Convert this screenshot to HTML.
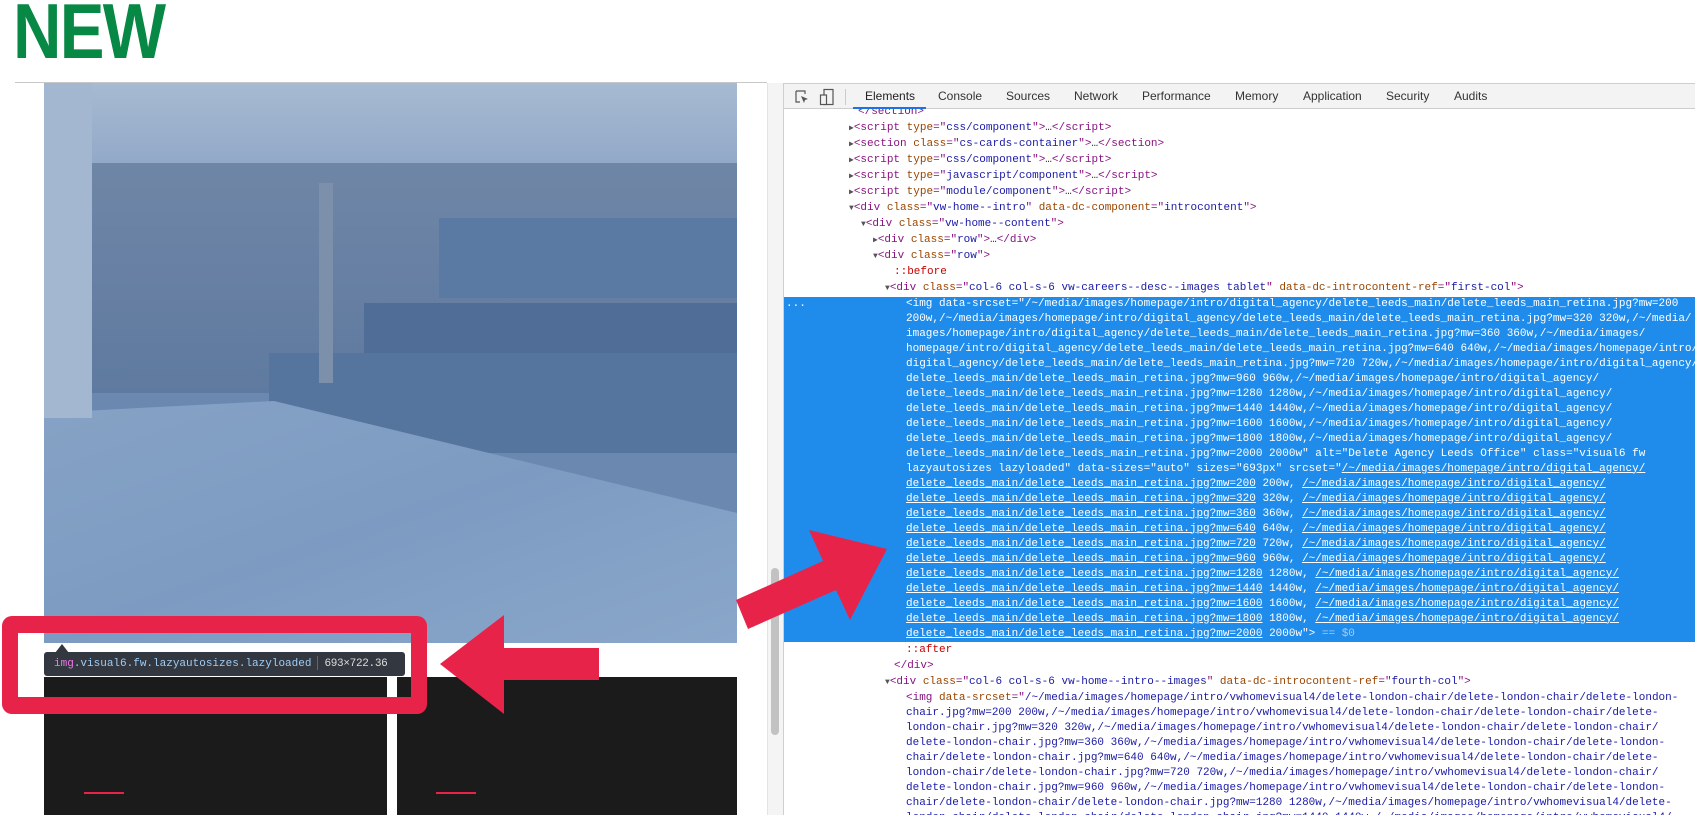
<!DOCTYPE html>
<html><head><meta charset="utf-8">
<style>
*{margin:0;padding:0;box-sizing:border-box}
html,body{width:1695px;height:815px;overflow:hidden;background:#fff;position:relative;font-family:"Liberation Sans",sans-serif}
.abs{position:absolute}
#new{left:13px;top:-8px;font-weight:bold;font-size:78px;color:#078845;transform:scaleX(0.86);transform-origin:left top;letter-spacing:-2px;line-height:1;font-family:"Liberation Sans",sans-serif}
#hr{left:15px;top:82px;width:752px;height:1px;background:#c8c8c8}
#dev{left:783px;top:83px;width:912px;height:732px;border-left:1px solid #cfcfcf;background:#fff;overflow:hidden}
#tb{position:absolute;left:0;top:0;width:912px;height:26px;background:#f3f3f3;border-top:1px solid #cfcfcf;border-bottom:1px solid #cdcdcd;z-index:3}
#tb span{position:absolute;top:5px;font-size:12px;color:#333}
#code{position:absolute;left:0;top:21px;width:912px;font-family:"Liberation Mono",monospace;font-size:11px;color:#222}
.l,.w{white-space:pre;position:relative;overflow:hidden}
.l{height:16px;line-height:16px}
.w{height:15px;line-height:15px}
.t{color:#881280}.a{color:#994500}.v{color:#1a1aa6}.p{color:#c80000}
.tri{font-size:8px;color:#555}
#sel{background:#1f8ceb;color:#fff}
#sel .u{text-decoration:underline}
#sel .f{color:#a8c9f0}
.card{top:677px;height:138px;background:#1b1b1b}
.dash{top:792px;height:2px;width:40px;background:#e8234a}
</style></head><body>
<div id="new" class="abs">NEW</div>
<div id="hr" class="abs"></div>

<svg class="abs" style="left:44px;top:83px" width="693" height="560" viewBox="0 0 693 560">
<defs>
<linearGradient id="g1" x1="0" y1="0" x2="0" y2="1"><stop offset="0" stop-color="#a7bad2"/><stop offset="1" stop-color="#8ea6c6"/></linearGradient>
<linearGradient id="g2" x1="0" y1="0" x2="0" y2="1"><stop offset="0" stop-color="#6f86a6"/><stop offset="1" stop-color="#5f7aa0"/></linearGradient>
<linearGradient id="g3" x1="0" y1="0" x2="1" y2="1"><stop offset="0" stop-color="#86a2c5"/><stop offset="0.5" stop-color="#7d9bc2"/><stop offset="1" stop-color="#8aa7ca"/></linearGradient>
</defs>
<rect width="693" height="560" fill="#6b88b0"/>
<rect width="693" height="95" fill="url(#g1)"/>
<rect y="80" width="693" height="230" fill="url(#g2)"/>
<rect x="395" y="135" width="300" height="80" fill="#5a7aa3"/>
<rect x="320" y="220" width="373" height="70" fill="#4f6d97"/>
<rect x="225" y="270" width="468" height="100" fill="#56759e"/>
<polygon points="0,330 230,318 693,430 693,560 0,560" fill="url(#g3)"/>
<rect x="0" y="0" width="48" height="335" fill="#a3b7d1"/>
<rect x="275" y="100" width="14" height="200" fill="#7c8fab"/>
</svg>

<div class="abs card" style="left:44px;width:343px"></div>
<div class="abs card" style="left:397px;width:340px"></div>
<div class="abs dash" style="left:84px"></div>
<div class="abs dash" style="left:436px"></div>

<div class="abs" style="left:767px;top:83px;width:16px;height:732px;background:#f4f4f4;border-left:1px solid #e3e3e3"></div>
<div class="abs" style="left:771px;top:568px;width:8px;height:167px;background:#c2c2c2;border-radius:4px"></div>

<div id="dev" class="abs">
<div id="tb">
<svg style="position:absolute;left:10px;top:5px" width="16" height="16" viewBox="0 0 16 16"><path d="M2 2h9v3M2 2v11h4" fill="none" stroke="#555" stroke-width="1.2"/><path d="M7 7l7 3-3 1-1 3z" fill="#555"/></svg>
<svg style="position:absolute;left:35px;top:4px" width="16" height="18" viewBox="0 0 16 18"><rect x="5" y="1.5" width="9" height="15" fill="none" stroke="#555" stroke-width="1.2"/><rect x="1.5" y="7" width="6" height="9.5" fill="#f3f3f3" stroke="#555" stroke-width="1.2"/></svg>
<div style="position:absolute;left:61px;top:5px;width:1px;height:16px;background:#ccc"></div>
<span style="left:81px;color:#222">Elements</span>
<div style="position:absolute;left:69px;top:23px;width:73px;height:2px;background:#1a73e8"></div>
<span style="left:154px">Console</span>
<span style="left:222px">Sources</span>
<span style="left:290px">Network</span>
<span style="left:358px">Performance</span>
<span style="left:451px">Memory</span>
<span style="left:519px">Application</span>
<span style="left:602px">Security</span>
<span style="left:670px">Audits</span>
</div>
<div id="code">
<div class="l" style="padding-left:74px"><span class="t">&lt;/section&gt;</span></div>
<div class="l" style="padding-left:65px"><span class="tri">▶</span><span class="t">&lt;script</span> <span class="a">type</span><span class="t">="</span><span class="v">css/component</span><span class="t">"&gt;</span>…<span class="t">&lt;/script&gt;</span></div>
<div class="l" style="padding-left:65px"><span class="tri">▶</span><span class="t">&lt;section</span> <span class="a">class</span><span class="t">="</span><span class="v">cs-cards-container</span><span class="t">"&gt;</span>…<span class="t">&lt;/section&gt;</span></div>
<div class="l" style="padding-left:65px"><span class="tri">▶</span><span class="t">&lt;script</span> <span class="a">type</span><span class="t">="</span><span class="v">css/component</span><span class="t">"&gt;</span>…<span class="t">&lt;/script&gt;</span></div>
<div class="l" style="padding-left:65px"><span class="tri">▶</span><span class="t">&lt;script</span> <span class="a">type</span><span class="t">="</span><span class="v">javascript/component</span><span class="t">"&gt;</span>…<span class="t">&lt;/script&gt;</span></div>
<div class="l" style="padding-left:65px"><span class="tri">▶</span><span class="t">&lt;script</span> <span class="a">type</span><span class="t">="</span><span class="v">module/component</span><span class="t">"&gt;</span>…<span class="t">&lt;/script&gt;</span></div>
<div class="l" style="padding-left:65px"><span class="tri">▼</span><span class="t">&lt;div</span> <span class="a">class</span><span class="t">="</span><span class="v">vw-home--intro</span><span class="t">"</span> <span class="a">data-dc-component</span><span class="t">="</span><span class="v">introcontent</span><span class="t">"&gt;</span></div>
<div class="l" style="padding-left:77px"><span class="tri">▼</span><span class="t">&lt;div</span> <span class="a">class</span><span class="t">="</span><span class="v">vw-home--content</span><span class="t">"&gt;</span></div>
<div class="l" style="padding-left:89px"><span class="tri">▶</span><span class="t">&lt;div</span> <span class="a">class</span><span class="t">="</span><span class="v">row</span><span class="t">"&gt;</span>…<span class="t">&lt;/div&gt;</span></div>
<div class="l" style="padding-left:89px"><span class="tri">▼</span><span class="t">&lt;div</span> <span class="a">class</span><span class="t">="</span><span class="v">row</span><span class="t">"&gt;</span></div>
<div class="l" style="padding-left:110px"><span class="p">::before</span></div>
<div class="l" style="padding-left:101px"><span class="tri">▼</span><span class="t">&lt;div</span> <span class="a">class</span><span class="t">="</span><span class="v">col-6 col-s-6 vw-careers--desc--images tablet</span><span class="t">"</span> <span class="a">data-dc-introcontent-ref</span><span class="t">="</span><span class="v">first-col</span><span class="t">"&gt;</span></div>
<div id="sel" style="margin-top:0.5px">
<div class="w"><span style="position:absolute;left:2px">...</span><span style="position:absolute;left:122px">&lt;img data-srcset="/~/media/images/homepage/intro/digital_agency/delete_leeds_main/delete_leeds_main_retina.jpg?mw=200</span></div>
<div class="w" style="padding-left:122px">200w,/~/media/images/homepage/intro/digital_agency/delete_leeds_main/delete_leeds_main_retina.jpg?mw=320 320w,/~/media/</div>
<div class="w" style="padding-left:122px">images/homepage/intro/digital_agency/delete_leeds_main/delete_leeds_main_retina.jpg?mw=360 360w,/~/media/images/</div>
<div class="w" style="padding-left:122px">homepage/intro/digital_agency/delete_leeds_main/delete_leeds_main_retina.jpg?mw=640 640w,/~/media/images/homepage/intro/</div>
<div class="w" style="padding-left:122px">digital_agency/delete_leeds_main/delete_leeds_main_retina.jpg?mw=720 720w,/~/media/images/homepage/intro/digital_agency/</div>
<div class="w" style="padding-left:122px">delete_leeds_main/delete_leeds_main_retina.jpg?mw=960 960w,/~/media/images/homepage/intro/digital_agency/</div>
<div class="w" style="padding-left:122px">delete_leeds_main/delete_leeds_main_retina.jpg?mw=1280 1280w,/~/media/images/homepage/intro/digital_agency/</div>
<div class="w" style="padding-left:122px">delete_leeds_main/delete_leeds_main_retina.jpg?mw=1440 1440w,/~/media/images/homepage/intro/digital_agency/</div>
<div class="w" style="padding-left:122px">delete_leeds_main/delete_leeds_main_retina.jpg?mw=1600 1600w,/~/media/images/homepage/intro/digital_agency/</div>
<div class="w" style="padding-left:122px">delete_leeds_main/delete_leeds_main_retina.jpg?mw=1800 1800w,/~/media/images/homepage/intro/digital_agency/</div>
<div class="w" style="padding-left:122px">delete_leeds_main/delete_leeds_main_retina.jpg?mw=2000 2000w" alt="Delete Agency Leeds Office" class="visual6 fw</div>
<div class="w" style="padding-left:122px">lazyautosizes lazyloaded" data-sizes="auto" sizes="693px" srcset="<span class="u">/~/media/images/homepage/intro/digital_agency/</span></div>
<div class="w" style="padding-left:122px"><span class="u">delete_leeds_main/delete_leeds_main_retina.jpg?mw=200</span> 200w, <span class="u">/~/media/images/homepage/intro/digital_agency/</span></div>
<div class="w" style="padding-left:122px"><span class="u">delete_leeds_main/delete_leeds_main_retina.jpg?mw=320</span> 320w, <span class="u">/~/media/images/homepage/intro/digital_agency/</span></div>
<div class="w" style="padding-left:122px"><span class="u">delete_leeds_main/delete_leeds_main_retina.jpg?mw=360</span> 360w, <span class="u">/~/media/images/homepage/intro/digital_agency/</span></div>
<div class="w" style="padding-left:122px"><span class="u">delete_leeds_main/delete_leeds_main_retina.jpg?mw=640</span> 640w, <span class="u">/~/media/images/homepage/intro/digital_agency/</span></div>
<div class="w" style="padding-left:122px"><span class="u">delete_leeds_main/delete_leeds_main_retina.jpg?mw=720</span> 720w, <span class="u">/~/media/images/homepage/intro/digital_agency/</span></div>
<div class="w" style="padding-left:122px"><span class="u">delete_leeds_main/delete_leeds_main_retina.jpg?mw=960</span> 960w, <span class="u">/~/media/images/homepage/intro/digital_agency/</span></div>
<div class="w" style="padding-left:122px"><span class="u">delete_leeds_main/delete_leeds_main_retina.jpg?mw=1280</span> 1280w, <span class="u">/~/media/images/homepage/intro/digital_agency/</span></div>
<div class="w" style="padding-left:122px"><span class="u">delete_leeds_main/delete_leeds_main_retina.jpg?mw=1440</span> 1440w, <span class="u">/~/media/images/homepage/intro/digital_agency/</span></div>
<div class="w" style="padding-left:122px"><span class="u">delete_leeds_main/delete_leeds_main_retina.jpg?mw=1600</span> 1600w, <span class="u">/~/media/images/homepage/intro/digital_agency/</span></div>
<div class="w" style="padding-left:122px"><span class="u">delete_leeds_main/delete_leeds_main_retina.jpg?mw=1800</span> 1800w, <span class="u">/~/media/images/homepage/intro/digital_agency/</span></div>
<div class="w" style="padding-left:122px"><span class="u">delete_leeds_main/delete_leeds_main_retina.jpg?mw=2000</span> 2000w"&gt; <span class="f">== $0</span></div>
</div>
<div class="l" style="padding-left:122px"><span class="p">::after</span></div>
<div class="l" style="padding-left:110px"><span class="t">&lt;/div&gt;</span></div>
<div class="l" style="padding-left:101px"><span class="tri">▼</span><span class="t">&lt;div</span> <span class="a">class</span><span class="t">="</span><span class="v">col-6 col-s-6 vw-home--intro--images</span><span class="t">"</span> <span class="a">data-dc-introcontent-ref</span><span class="t">="</span><span class="v">fourth-col</span><span class="t">"&gt;</span></div>
<div class="l" style="padding-left:122px"><span class="t">&lt;img</span> <span class="a">data-srcset</span><span class="t">="</span><span class="v">/~/media/images/homepage/intro/vwhomevisual4/delete-london-chair/delete-london-chair/delete-london-</span></div>
<div class="w v" style="padding-left:122px">chair.jpg?mw=200 200w,/~/media/images/homepage/intro/vwhomevisual4/delete-london-chair/delete-london-chair/delete-</div>
<div class="w v" style="padding-left:122px">london-chair.jpg?mw=320 320w,/~/media/images/homepage/intro/vwhomevisual4/delete-london-chair/delete-london-chair/</div>
<div class="w v" style="padding-left:122px">delete-london-chair.jpg?mw=360 360w,/~/media/images/homepage/intro/vwhomevisual4/delete-london-chair/delete-london-</div>
<div class="w v" style="padding-left:122px">chair/delete-london-chair.jpg?mw=640 640w,/~/media/images/homepage/intro/vwhomevisual4/delete-london-chair/delete-</div>
<div class="w v" style="padding-left:122px">london-chair/delete-london-chair.jpg?mw=720 720w,/~/media/images/homepage/intro/vwhomevisual4/delete-london-chair/</div>
<div class="w v" style="padding-left:122px">delete-london-chair.jpg?mw=960 960w,/~/media/images/homepage/intro/vwhomevisual4/delete-london-chair/delete-london-</div>
<div class="w v" style="padding-left:122px">chair/delete-london-chair/delete-london-chair.jpg?mw=1280 1280w,/~/media/images/homepage/intro/vwhomevisual4/delete-</div>
<div class="w v" style="padding-left:122px">london-chair/delete-london-chair/delete-london-chair.jpg?mw=1440 1440w,/~/media/images/homepage/intro/vwhomevisual4/</div>
</div>
</div>

<svg class="abs" style="left:55px;top:644px" width="14" height="9"><polygon points="7,0 14,9 0,9" fill="#333740"/></svg>
<div class="abs" style="left:44px;top:652px;width:361px;height:24px;background:#333740;border-radius:3px;font-family:'Liberation Mono',monospace;font-size:11px;line-height:24px;white-space:pre;padding-left:10px"><span style="color:#ee78e6">img</span><span style="color:#9fcdf5">.visual6.fw.lazyautosizes.lazyloaded</span><span style="display:inline-block;width:1px;height:14px;background:#666;vertical-align:middle;margin:0 6px"></span><span style="color:#ddd;letter-spacing:-0.3px">693×722.36</span></div>

<div class="abs" style="left:2px;top:616px;width:425px;height:98px;border:16px solid #e8234a;border-top-width:17px;border-bottom-width:17px;border-radius:10px"></div>
<svg class="abs" style="left:0;top:0" width="1695" height="815">
<polygon points="440,664 504,615 504,648 599,648 599,680 504,680 504,714" fill="#e8234a"/>
<polygon points="736,600 823,561 809,530 887,549 850,620 836,590 748,629" fill="#e8234a"/>
</svg>
</body></html>
